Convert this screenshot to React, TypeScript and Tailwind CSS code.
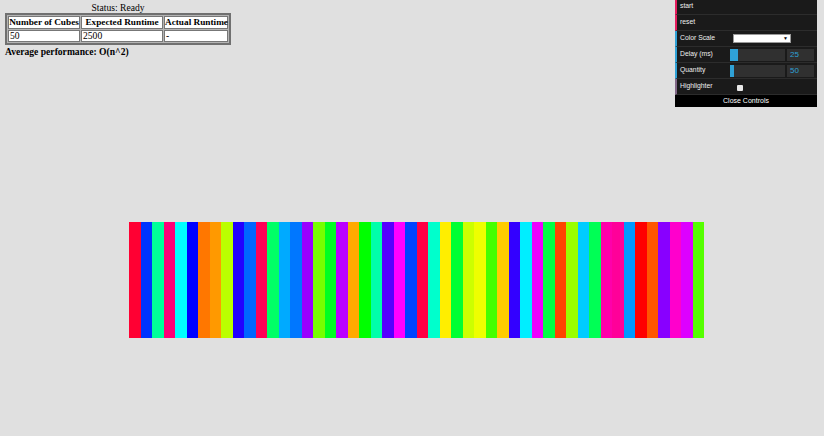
import { useState } from 'react'

const COLORS = [
  '#ff0033', '#0033ff', '#00ff99', '#ff0077', '#00ffff', '#0000ff', '#ff7700', '#ff9900', '#bbff00', '#2200ff',
  '#0066ff', '#ff0055', '#00ff66', '#00aaff', '#0077ff', '#9900ff', '#77ff00', '#00ff22', '#bb00ff', '#ffaa00',
  '#00ff00', '#00ffaa', '#5500ff', '#ff00ff', '#0044ff', '#ff0044', '#00ffcc', '#ffee00', '#00ff33', '#ccff00',
  '#eeff00', '#44ff00', '#ffcc00', '#3300ff', '#00eeff', '#ee00ff', '#00ff44', '#ff4400', '#99ff00', '#00ccff',
  '#00ff55', '#ff00aa', '#ff0099', '#0099ff', '#ff0000', '#ff5500', '#8800ff', '#ff00cc', '#dd00ff', '#55ff00',
]

function Controls() {
  const [open, setOpen] = useState(true)
  const [highlight, setHighlight] = useState(false)

  const row = 'flex items-center h-[16px] border-b border-[#2c2c2c] border-l-2 pl-[3px]'

  return (
    <div className="absolute top-[-1px] right-[7px] w-[142px] bg-[#1a1a1a] text-[#eeeeee] text-[6.8px] font-['Liberation_Sans',Arial,sans-serif]">
      {open && (
        <ul>
          <li className={`${row} border-l-[#e61d5f]`}>start</li>
          <li className={`${row} border-l-[#e61d5f]`}>reset</li>
          <li className={`${row} border-l-[#2fa1d6]`}>
            <span className="w-[53px]">Color Scale</span>
            <div className="flex items-center justify-between w-[58px] h-[9px] bg-white border border-[#999] px-[1px]">
              <span />
              <span className="text-black text-[5px] pr-[1px]">▼</span>
            </div>
          </li>
          <li className={`${row} border-l-[#2fa1d6]`}>
            <span className="w-[50px]">Delay (ms)</span>
            <div className="w-[55px] h-[12px] bg-[#303030]">
              <div className="h-full w-[8px] bg-[#2fa1d6]" />
            </div>
            <div className="ml-[2px] w-[27px] h-[12px] bg-[#303030] text-[#2fa1d6] text-[8px] leading-[12px] pl-[3px]">25</div>
          </li>
          <li className={`${row} border-l-[#2fa1d6]`}>
            <span className="w-[50px]">Quantity</span>
            <div className="w-[55px] h-[12px] bg-[#303030]">
              <div className="h-full w-[4px] bg-[#2fa1d6]" />
            </div>
            <div className="ml-[2px] w-[27px] h-[12px] bg-[#303030] text-[#2fa1d6] text-[8px] leading-[12px] pl-[3px]">50</div>
          </li>
          <li className={`${row} border-l-[#806787]`}>
            <span className="w-[57px]">Highlighter</span>
            <button
              onClick={() => setHighlight(!highlight)}
              className={`mt-[3px] w-[6px] h-[6px] rounded-[1px] ${highlight ? 'bg-[#2fa1d6]' : 'bg-[#e8e8e8]'}`}
            />
          </li>
        </ul>
      )}
      <button
        onClick={() => setOpen(!open)}
        className="block w-full h-[12px] leading-[12px] bg-black text-white text-center text-[7px]"
      >
        {open ? 'Close Controls' : 'Open Controls'}
      </button>
    </div>
  )
}

export default function App() {
  const th = 'border border-[#777] bg-white font-bold text-center h-[13px] p-0 leading-[11px] whitespace-nowrap text-[9.25px]'
  const td = 'border border-[#777] bg-white text-left h-[11px] p-0 pl-[1px] leading-[10px]'

  return (
    <div className="relative min-h-screen bg-[#e0e0e0] text-black font-['Liberation_Serif','Times_New_Roman',serif] text-[9.6px] pt-[2px] pl-[5px] overflow-hidden">
      {/* Stats */}
      <div className="w-[226px] text-center leading-[11px]">Status: Ready</div>
      <table className="border-separate border-spacing-[1px] border-2 border-[#707070] bg-[#b4b4b4] table-fixed w-[226px]">
        <thead>
          <tr>
            <th className={`${th} w-[72px]`}>Number of Cubes</th>
            <th className={`${th} w-[82px]`}>Expected Runtime</th>
            <th className={`${th} w-[64px]`}>Actual Runtime</th>
          </tr>
        </thead>
        <tbody>
          <tr>
            <td className={td}>50</td>
            <td className={td}>2500</td>
            <td className={td}>-</td>
          </tr>
        </tbody>
      </table>
      <div className="font-bold leading-[11px] mt-[1px]">Average performance: O(n^2)</div>

      {/* Cubes */}
      <div className="flex w-[575px] h-[116px] ml-[124px] mt-[165px]">
        {COLORS.map((c, i) => (
          <div key={i} className="flex-1" style={{ backgroundColor: c }} />
        ))}
      </div>

      <Controls />
    </div>
  )
}
